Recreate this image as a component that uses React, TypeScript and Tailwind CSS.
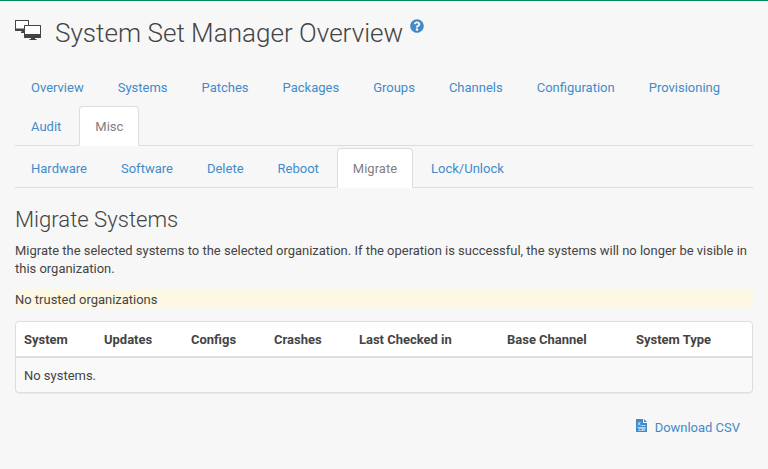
import React from 'react';
import { FaQuestionCircle } from 'react-icons/fa';

type Tab = { label: string; active?: boolean };

const mainTabs: Tab[] = [
  { label: 'Overview' }, { label: 'Systems' }, { label: 'Patches' }, { label: 'Packages' },
  { label: 'Groups' }, { label: 'Channels' }, { label: 'Configuration' }, { label: 'Provisioning' },
  { label: 'Audit' }, { label: 'Misc', active: true },
];
const subTabs: Tab[] = [
  { label: 'Hardware' }, { label: 'Software' }, { label: 'Delete' }, { label: 'Reboot' },
  { label: 'Migrate', active: true }, { label: 'Lock/Unlock' },
];

function Tabs({ items }: { items: Tab[] }) {
  return (
    <ul className="flex flex-wrap border-b border-[#dddddd] text-[13px]">
      {items.map((t) => (
        <li key={t.label} className="-mb-px mr-[2px]">
          <a
            className={
              t.active
                ? 'block rounded-t border border-[#dddddd] border-b-white bg-white px-[15px] pt-[11px] pb-[9px] text-[#808080]'
                : 'block border border-transparent px-[15px] pt-[11px] pb-[9px] text-[#428bca]'
            }
          >
            {t.label}
          </a>
        </li>
      ))}
    </ul>
  );
}

const columns = [
  ['System', 'w-[80px]'], ['Updates', 'w-[87px]'], ['Configs', 'w-[83px]'], ['Crashes', 'w-[85px]'],
  ['Last Checked in', 'w-[148px]'], ['Base Channel', 'w-[129px]'], ['System Type', 'w-[124px]'],
];

export default function App() {
  return (
    <div className="h-[469px] overflow-hidden border-t border-[#00885f] bg-[#f7f7f7] px-[15px] font-[Roboto,sans-serif] text-[12.98px] leading-[18px] text-[#444444]">
      <h1 className="flex h-[66px] pt-[14px] text-[26.08px] font-light leading-[36px]">
        <svg className="mt-[5px] mr-[13px] h-[20px] w-[27px]" viewBox="0 0 27 20">
          <path fill="#444" d="M.5 0h13q.5 0 .5.5V6H9v7H6v-1.500h1V11H.5Q0 11 0 10.500V.5Q0 0 .5 0z" />
          <path fill="#fff" d="M1 1h12v5H9v2.500H1z" />
          <path fill="#444" d="M9.500 5h16q.5 0 .5.5v12q0 .5-.5.5H20v1h1.500v1h-7v-1H16v-1H9.500q-.5 0-.5-.5v-12q0-.5.5-.5z" />
          <path fill="#fff" d="M10 6h15v8H10z" />
        </svg>
        <span>System Set Manager Overview</span>
        <FaQuestionCircle className="mt-[4px] ml-[7px] size-[14px] text-[#428bca]" />
      </h1>
      <Tabs items={mainTabs} />
      <div className="mt-[2px]"><Tabs items={subTabs} /></div>
      <h2 className="mt-[18px] text-[22.1px] font-light leading-[26px]">Migrate Systems</h2>
      <p className="mt-[10px]">Migrate the selected systems to the selected organization. If the operation is successful, the systems will no longer be visible in this organization.</p>
      <div className="mt-[12px] h-[18px] bg-[#fcf8e3] pt-px">No trusted organizations</div>
      <div className="mt-[13px] rounded border border-[#dddddd] bg-[#f9f9f9] shadow-[0_1px_1px_rgba(0,0,0,0.05)]">
        <div className="flex h-[36px] items-center rounded-t border-b-2 border-[#dddddd] bg-white pt-[2px] font-bold">
          {columns.map(([name, width]) => <div key={name} className={`${width} pl-2`}>{name}</div>)}
        </div>
        <div className="flex h-[34px] items-center pt-[2px] pl-2">No systems.</div>
      </div>
      <a className="mt-[26px] flex items-center justify-end pr-[13px] text-[#428bca]">
        <svg className="mr-[7px] -mt-[4px] h-[14px] w-[12px]" viewBox="0 0 12 14">
          <path fill="currentColor" d="M0 0h7v4h4v9H0zM8 0l3 3H8z" />
          <path stroke="#f7f7f7" strokeWidth=".7" fill="none" d="M2 3l2.500 3.500M4.500 3L2 6.500M5.500 6.500h4M1.500 8.500h8" />
          <text x="2.600" y="12.200" fontSize="3.500" fontWeight="700" fill="#f7f7f7">CSV</text>
        </svg>
        Download CSV
      </a>
    </div>
  );
}
